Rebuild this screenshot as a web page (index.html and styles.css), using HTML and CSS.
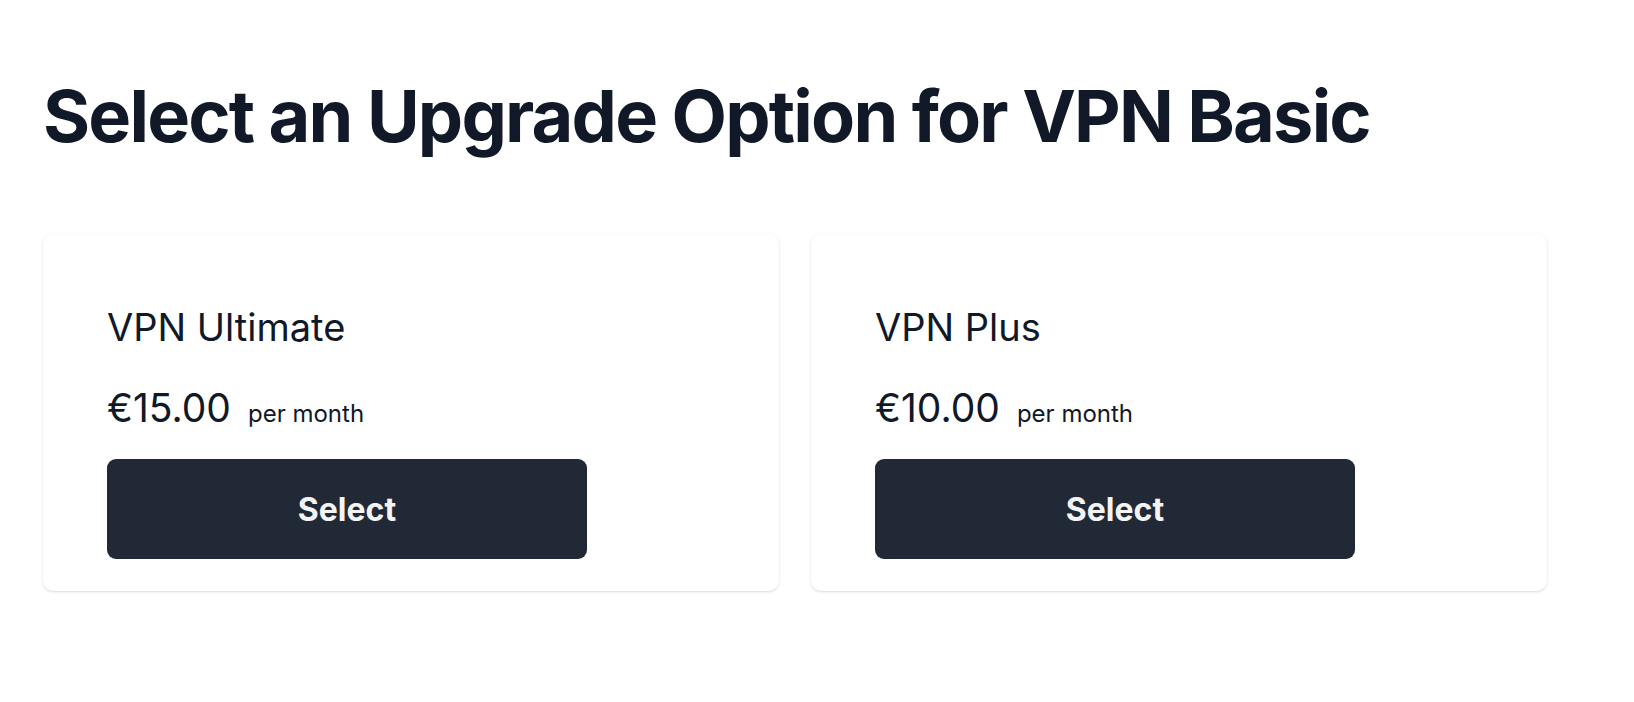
FILE: index.html
```html
<!DOCTYPE html>
<html lang="en">
<head>
    <meta charset="UTF-8">
    <meta name="viewport" content="width=device-width, initial-scale=1.0">
    <title>Upgrade Options</title>
    <link rel="stylesheet" href="styles.css">
</head>
<body>
    <div class="page">
        <h1 class="title">Select an Upgrade Option for VPN Basic</h1>
        <div class="plans">
            <div class="plan">
                <h3 class="plan-name">VPN Ultimate</h3>
                <div class="plan-price">
                    <span class="amount">€15.00</span>
                    <span class="period">per month</span>
                </div>
                <button class="select-btn">Select</button>
            </div>
            <div class="plan">
                <h3 class="plan-name">VPN Plus</h3>
                <div class="plan-price">
                    <span class="amount">€10.00</span>
                    <span class="period">per month</span>
                </div>
                <button class="select-btn">Select</button>
            </div>
        </div>
    </div>
</body>
</html>
```

FILE: styles.css
```css
body {
    margin: 0;
    background-color: #fff;
    font-family: Inter, "Noto Sans", sans-serif;
    color: #111827;
}
.page {
    padding: 80px 43px 40px 43px;
}
.title {
    margin: 0 0 82px 0;
    font-size: 72px;
    font-weight: 700;
    line-height: 1;
    letter-spacing: -0.025em;
    color: #111827;
}
.plans {
    display: grid;
    grid-template-columns: 736px 736px;
    gap: 32px;
}
.plan {
    background-color: #fff;
    border-radius: 10px;
    box-shadow: 0 1px 3px rgba(0, 0, 0, 0.1), 0 1px 2px rgba(0, 0, 0, 0.06);
    padding: 65px 64px 32px 64px;
}
.plan-name {
    margin: 0;
    font-size: 38px;
    font-weight: 400;
    line-height: 56px;
}
.plan-price {
    display: flex;
    align-items: baseline;
    gap: 17px;
    margin: 29px 0 27px 0;
}
.amount {
    font-size: 39px;
    line-height: 48px;
}
.period {
    font-size: 24px;
    line-height: 32px;
}
.select-btn {
    display: block;
    width: 480px;
    height: 100px;
    border: none;
    border-radius: 9px;
    background-color: #222936;
    color: #f3f4f6;
    font-family: Inter, "Noto Sans", sans-serif;
    font-size: 32px;
    font-weight: 700;
    cursor: pointer;
}
```
